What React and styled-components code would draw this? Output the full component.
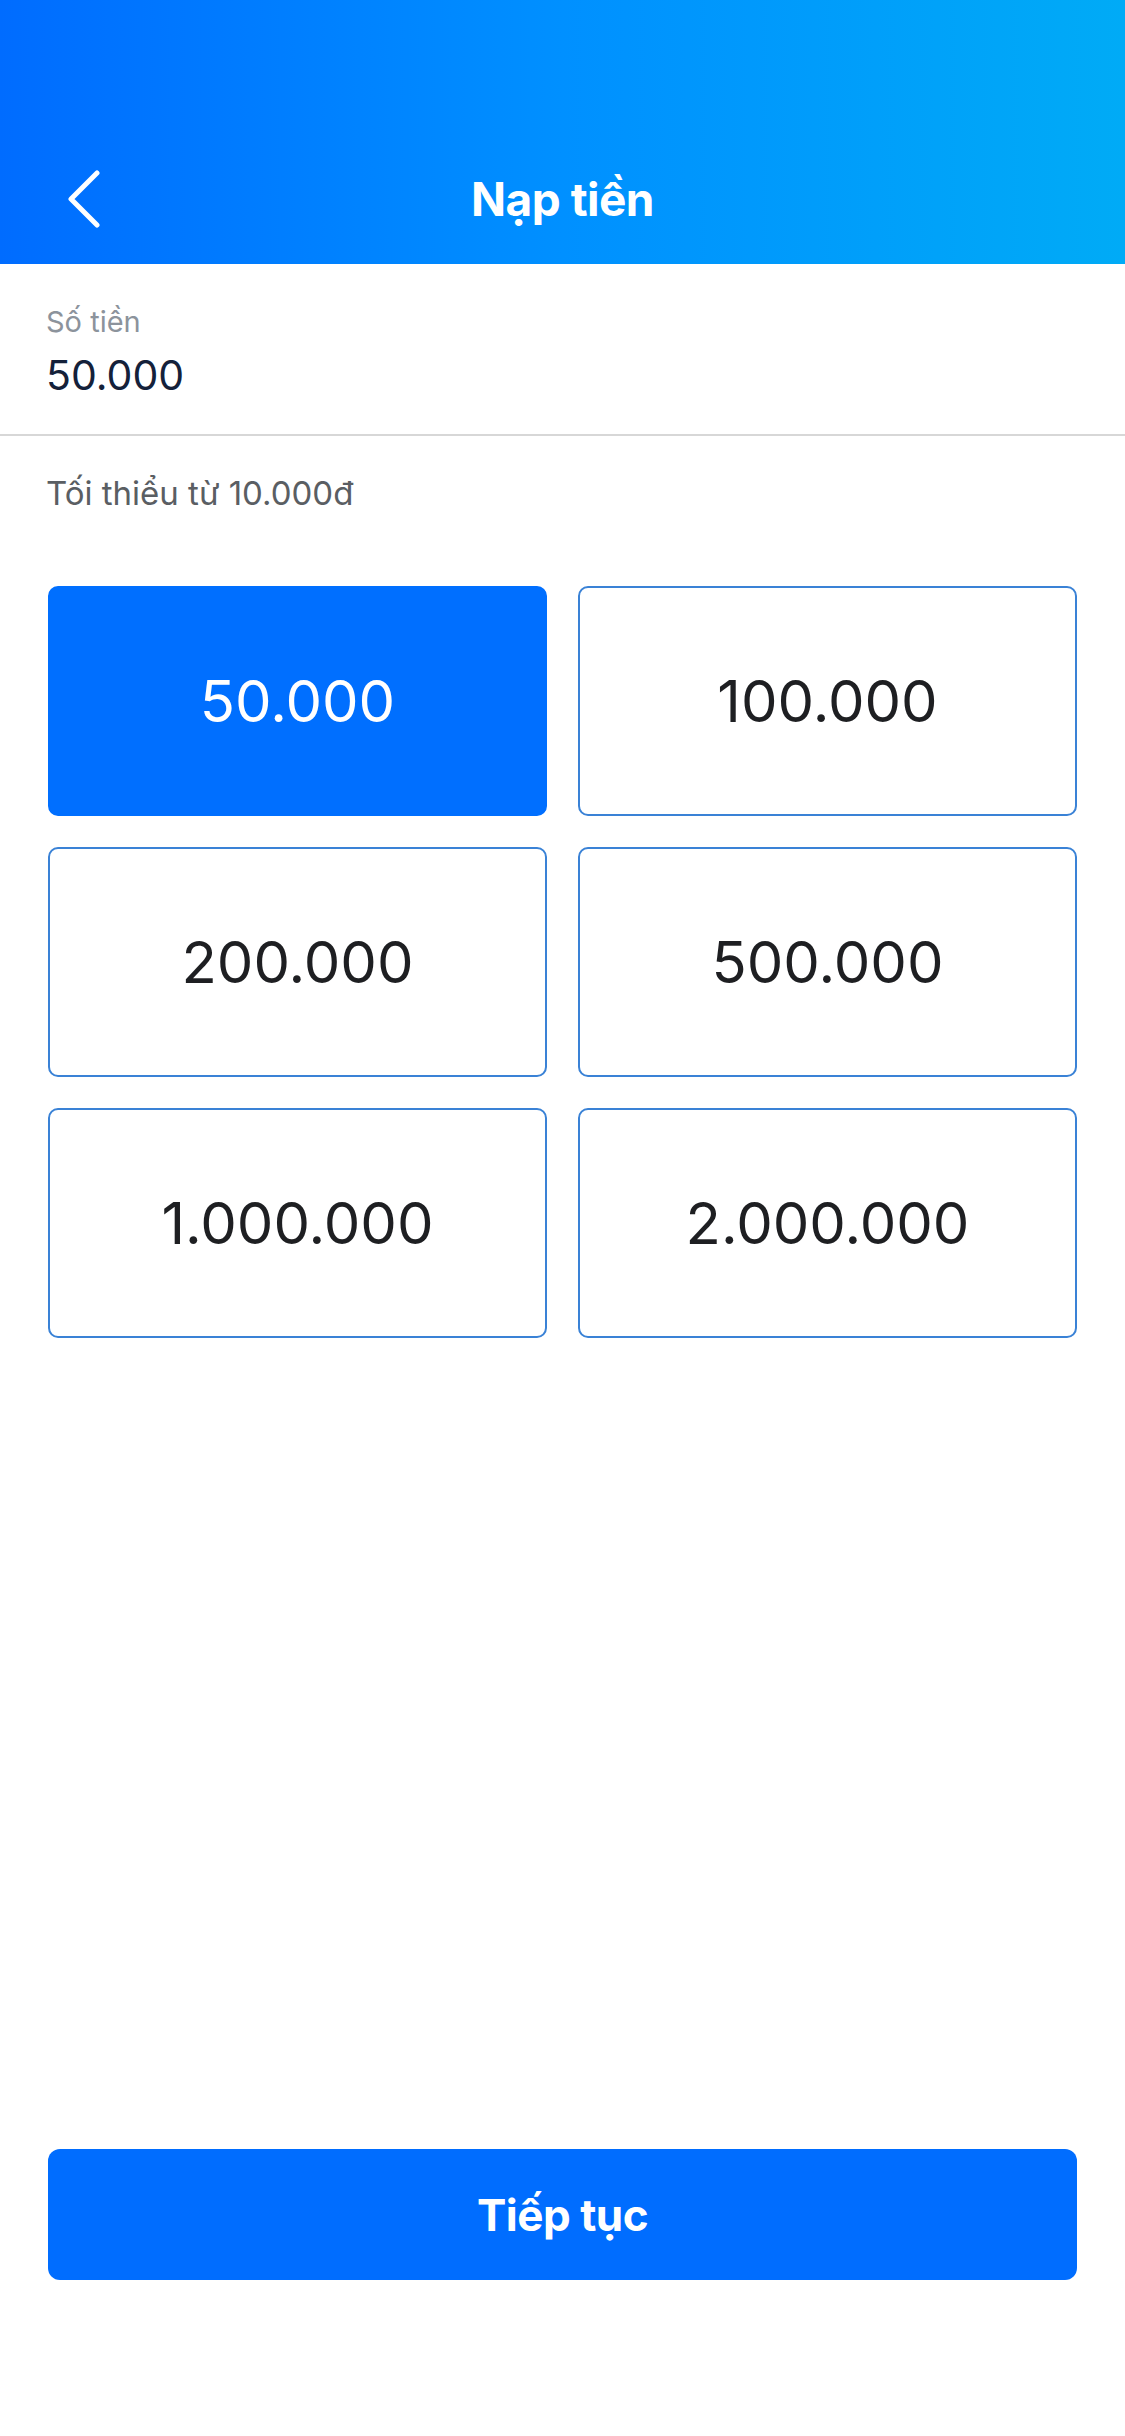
import styled, { createGlobalStyle } from 'styled-components'

const Global = createGlobalStyle`
body{
  margin:0;
  background:#fff;
  font-family:Inter, "Noto Sans", sans-serif;
}
`

const amounts = ['50.000', '100.000', '200.000', '500.000', '1.000.000', '2.000.000']

export default function App(){
    const selected = '50.000'
    return (
        <Tela>
            <Global />
            <Header>
                <Bar>
                    <Back aria-label="back">
                        <svg width="36" height="58" viewBox="0 0 36 58">
                            <polyline points="31,3 5,29 31,55" fill="none" stroke="#fff" strokeWidth="5" strokeLinecap="round" strokeLinejoin="round" />
                        </svg>
                    </Back>
                    <Title>Nạp tiền</Title>
                </Bar>
            </Header>
            <Campo>
                <Rotulo>Số tiền</Rotulo>
                <Valor>50.000</Valor>
            </Campo>
            <Dica>Tối thiểu từ 10.000đ</Dica>
            <Grade>
                {amounts.map(v => (
                    <Opcao key={v} ativo={v === selected}>{v}</Opcao>
                ))}
            </Grade>
            <Rodape>
                <Continuar>Tiếp tục</Continuar>
            </Rodape>
        </Tela>
    )
}

const Tela = styled.div`
display:flex;
flex-direction:column;
min-height:100vh;
`
const Header = styled.header`
height:264px;
display:flex;
align-items:flex-end;
background:linear-gradient(90deg, #006cff 0%, #0090ff 50%, #00abf6 100%);
`
const Bar = styled.div`
position:relative;
width:100%;
height:130px;
display:flex;
align-items:center;
justify-content:center;
`
const Back = styled.button`
position:absolute;
left:66px;
top:50%;
transform:translateY(-50%);
background:none;
border:none;
padding:0;
display:flex;
`
const Title = styled.h1`
margin:0;
color:#fff;
font-size:46px;
font-weight:700;
letter-spacing:-0.5px;
`
const Campo = styled.div`
display:flex;
flex-direction:column;
gap:7px;
padding:38px 46px 33px;
border-bottom:2px solid #d7d7d7;
`
const Rotulo = styled.span`
font-size:29px;
line-height:40px;
color:#8c939c;
`
const Valor = styled.span`
font-size:41px;
line-height:52px;
color:#14213a;
`
const Dica = styled.p`
margin:37px 46px 0;
font-size:33px;
line-height:40px;
color:#5a5e63;
`
const Grade = styled.div`
display:grid;
grid-template-columns:1fr 1fr;
gap:31px 31px;
padding:0 48px;
margin-top:73px;
`
const Opcao = styled.button`
height:230px;
border-radius:10px;
border:2px solid ${p => p.ativo ? '#006fff' : '#3a82d6'};
background:${p => p.ativo ? '#006fff' : '#fff'};
color:${p => p.ativo ? '#fff' : '#1e1f22'};
font-family:Inter, "Noto Sans", sans-serif;
font-size:58px;
font-weight:400;
display:flex;
align-items:center;
justify-content:center;
`
const Rodape = styled.div`
margin-top:auto;
padding:0 48px 156px;
`
const Continuar = styled.button`
width:100%;
height:131px;
border:none;
border-radius:12px;
background:#006dff;
color:#fff;
font-family:Inter, "Noto Sans", sans-serif;
font-size:44px;
font-weight:700;
letter-spacing:-0.5px;
`
